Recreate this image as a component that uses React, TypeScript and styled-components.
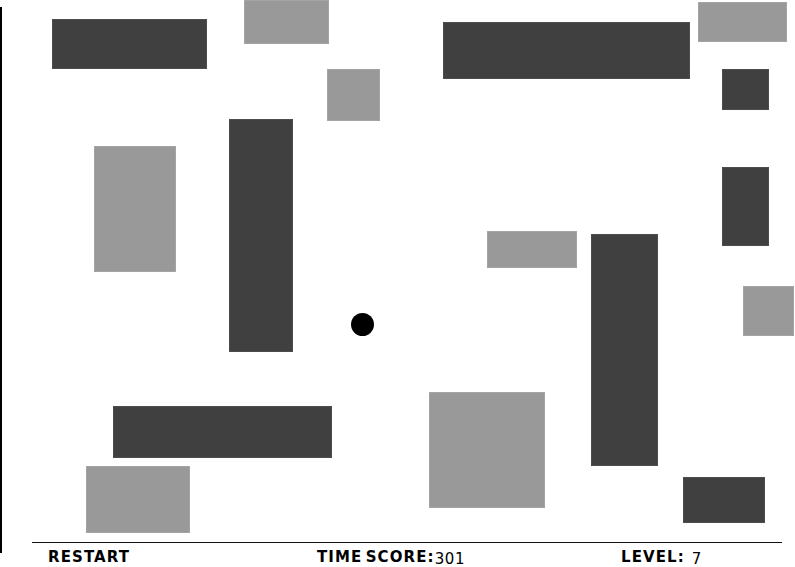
import React from "react";
import styled, { createGlobalStyle } from "styled-components";

const GlobalStyle = createGlobalStyle`
  html, body {
    margin: 0;
    padding: 0;
    background: #ffffff;
  }
  body {
    font-family: "DejaVu Sans", "Liberation Sans", sans-serif;
  }
`;

type Tone = "dark" | "light";

interface Block {
  x: number;
  y: number;
  w: number;
  h: number;
  tone: Tone;
}

const WALL = 2;

const blocks: Block[] = [
  { x: 51.5, y: 19, w: 155, h: 50, tone: "dark" },
  { x: 244, y: 0, w: 85, h: 44, tone: "light" },
  { x: 327, y: 69, w: 53, h: 52, tone: "light" },
  { x: 443, y: 22, w: 247, h: 57, tone: "dark" },
  { x: 698, y: 2, w: 89, h: 40, tone: "light" },
  { x: 722, y: 69, w: 47, h: 41, tone: "dark" },
  { x: 94, y: 146, w: 82, h: 126, tone: "light" },
  { x: 229, y: 119, w: 64, h: 233, tone: "dark" },
  { x: 722, y: 167, w: 47, h: 79, tone: "dark" },
  { x: 487, y: 231, w: 90, h: 37, tone: "light" },
  { x: 591, y: 234, w: 67, h: 232, tone: "dark" },
  { x: 743, y: 286, w: 51, h: 50, tone: "light" },
  { x: 113, y: 405.5, w: 219, h: 52, tone: "dark" },
  { x: 429, y: 392, w: 116, h: 116, tone: "light" },
  { x: 86, y: 466, w: 104, h: 67, tone: "light" },
  { x: 683, y: 477, w: 82, h: 46, tone: "dark" },
];

const ball = { x: 350.5, y: 313, d: 23 };

const Screen = styled.div`
  display: flex;
  width: 795px;
  height: 567px;
  overflow: hidden;
  background: #ffffff;
`;

const Wall = styled.div`
  flex: 0 0 ${WALL}px;
  width: ${WALL}px;
  height: 546px;
  margin-top: 7px;
  background: #000000;
`;

const Main = styled.div`
  flex: 1;
  display: flex;
  flex-direction: column;
  min-width: 0;
`;

const Field = styled.div`
  position: relative;
  height: 542px;
  flex: 0 0 542px;
`;

const Obstacle = styled.div<{ $tone: Tone }>`
  position: absolute;
  box-sizing: border-box;
  background: ${(p) => (p.$tone === "dark" ? "#404040" : "#999999")};
  box-shadow: inset 0 0 0 1px
    ${(p) => (p.$tone === "dark" ? "#4c4c4c" : "#a4a4a4")};
`;

const Ball = styled.div`
  position: absolute;
  border-radius: 50%;
  background: #000000;
`;

const Footer = styled.div`
  margin-left: ${32 - WALL}px;
  width: 750px;
  border-top: 1.5px solid #111111;
  box-sizing: border-box;
  padding: 7px 0 0 16px;
  display: grid;
  grid-template-columns: 269px 304px 1fr;
  align-items: baseline;
`;

const Item = styled.div`
  display: flex;
  align-items: baseline;
  white-space: nowrap;
`;

const Label = styled.span<{ $clickable?: boolean }>`
  font-family: "DejaVu Sans", "Liberation Sans", sans-serif;
  font-weight: 700;
  font-size: 15px;
  line-height: 15px;
  letter-spacing: 1.1px;
  word-spacing: -3px;
  color: #000000;
  cursor: ${(p) => (p.$clickable ? "pointer" : "default")};
`;

const Value = styled.span<{ $gap: number }>`
  font-family: "DejaVu Sans", "Liberation Sans", sans-serif;
  font-weight: 400;
  font-size: 15px;
  line-height: 15px;
  letter-spacing: 0.6px;
  color: #000000;
  margin-left: ${(p) => p.$gap}px;
  position: relative;
  top: 2px;
`;

export default function App() {
  return (
    <>
      <GlobalStyle />
      <Screen>
        <Wall />
        <Main>
          <Field>
            {blocks.map((b, i) => (
              <Obstacle
                key={i}
                $tone={b.tone}
                style={{ left: b.x - WALL, top: b.y, width: b.w, height: b.h }}
              />
            ))}
            <Ball
              style={{
                left: ball.x - WALL,
                top: ball.y,
                width: ball.d,
                height: ball.d,
              }}
            />
          </Field>
          <Footer>
            <Item>
              <Label $clickable>RESTART</Label>
            </Item>
            <Item>
              <Label>TIME SCORE:</Label>
              <Value $gap={0}>301</Value>
            </Item>
            <Item>
              <Label>LEVEL:</Label>
              <Value $gap={7}>7</Value>
            </Item>
          </Footer>
        </Main>
      </Screen>
    </>
  );
}
